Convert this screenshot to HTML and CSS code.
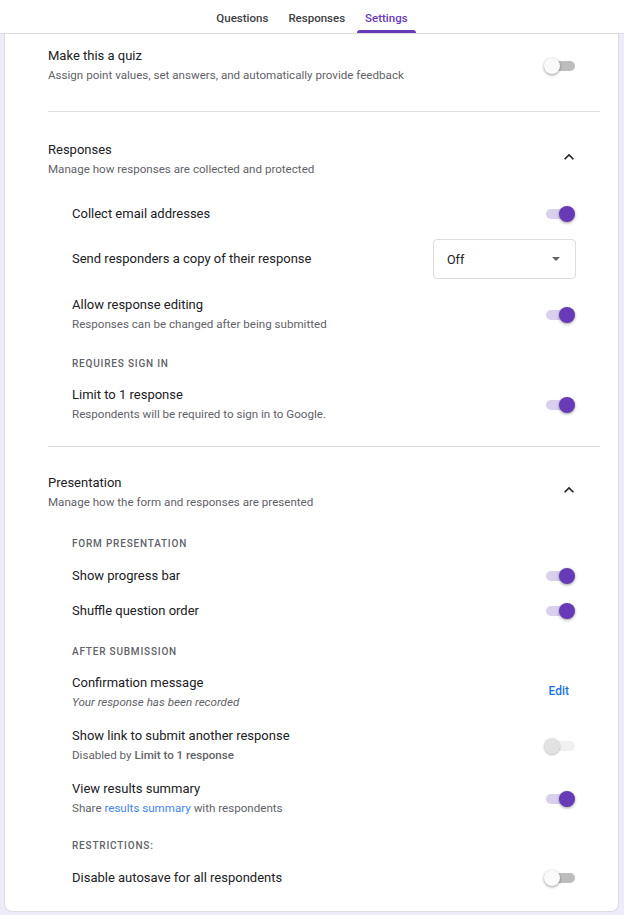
FILE: index.html
```html
<!DOCTYPE html>
<html lang="en">
<head>
<meta charset="utf-8">
<title>Settings</title>
<link rel="stylesheet" href="styles.css">
</head>
<body>
<header class="tabbar">
  <nav class="tabs">
    <a class="tab">Questions</a>
    <a class="tab">Responses</a>
    <a class="tab active">Settings</a>
  </nav>
</header>
<main class="card">
  <section class="section first">
    <div class="head">
      <div class="text">
        <div class="title">Make this a quiz</div>
        <div class="sub">Assign point values, set answers, and automatically provide feedback</div>
      </div>
      <span class="toggle off"><span class="track"></span><span class="thumb"></span></span>
    </div>
  </section>

  <section class="section responses">
    <div class="head chevron-head">
      <div class="text">
        <div class="title">Responses</div>
        <div class="sub">Manage how responses are collected and protected</div>
      </div>
      <svg class="chevron" viewBox="0 0 24 24" width="20" height="20"><path d="M12 8l-6 6 1.41 1.41L12 10.83l4.59 4.58L18 14z"/></svg>
    </div>
    <div class="list">
      <div class="row single">
        <div class="text"><div class="title">Collect email addresses</div></div>
        <span class="toggle on"><span class="track"></span><span class="thumb"></span></span>
      </div>
      <div class="row select-row">
        <div class="text"><div class="title">Send responders a copy of their response</div></div>
        <div class="select"><span>Off</span><span class="caret"></span></div>
      </div>
      <div class="row">
        <div class="text">
          <div class="title">Allow response editing</div>
          <div class="sub">Responses can be changed after being submitted</div>
        </div>
        <span class="toggle on"><span class="track"></span><span class="thumb"></span></span>
      </div>
      <div class="label">Requires sign in</div>
      <div class="row">
        <div class="text">
          <div class="title">Limit to 1 response</div>
          <div class="sub">Respondents will be required to sign in to Google.</div>
        </div>
        <span class="toggle on"><span class="track"></span><span class="thumb"></span></span>
      </div>
    </div>
  </section>

  <section class="section last">
    <div class="head chevron-head">
      <div class="text">
        <div class="title">Presentation</div>
        <div class="sub">Manage how the form and responses are presented</div>
      </div>
      <svg class="chevron" viewBox="0 0 24 24" width="20" height="20"><path d="M12 8l-6 6 1.41 1.41L12 10.83l4.59 4.58L18 14z"/></svg>
    </div>
    <div class="list">
      <div class="label">Form presentation</div>
      <div class="row single">
        <div class="text"><div class="title">Show progress bar</div></div>
        <span class="toggle on"><span class="track"></span><span class="thumb"></span></span>
      </div>
      <div class="row single">
        <div class="text"><div class="title">Shuffle question order</div></div>
        <span class="toggle on"><span class="track"></span><span class="thumb"></span></span>
      </div>
      <div class="label">After submission</div>
      <div class="row">
        <div class="text">
          <div class="title">Confirmation message</div>
          <div class="sub italic">Your response has been recorded</div>
        </div>
        <a class="edit">Edit</a>
      </div>
      <div class="row">
        <div class="text">
          <div class="title">Show link to submit another response</div>
          <div class="sub">Disabled by <b>Limit to 1 response</b></div>
        </div>
        <span class="toggle disabled"><span class="track"></span><span class="thumb"></span></span>
      </div>
      <div class="row">
        <div class="text">
          <div class="title">View results summary</div>
          <div class="sub">Share <a class="link">results summary</a> with respondents</div>
        </div>
        <span class="toggle on"><span class="track"></span><span class="thumb"></span></span>
      </div>
      <div class="label tight">Restrictions:</div>
      <div class="row single">
        <div class="text"><div class="title">Disable autosave for all respondents</div></div>
        <span class="toggle off"><span class="track"></span><span class="thumb"></span></span>
      </div>
    </div>
  </section>
</main>
</body>
</html>
```

FILE: styles.css
```css
* { box-sizing: border-box; }

html, body {
  margin: 0;
  padding: 0;
}

body {
  background: #f0ebf8;
  font-family: Roboto, "Noto Sans", Arial, sans-serif;
  color: #202124;
  width: 624px;
  height: 915px;
  overflow: hidden;
}

.tabbar {
  background: #fff;
  height: 34px;
  border-bottom: 1px solid #dadce0;
  display: flex;
  justify-content: center;
}

.tabs {
  display: flex;
  gap: 4px;
  height: 33px;
}

.tab {
  position: relative;
  display: flex;
  align-items: center;
  padding: 3px 8px 0;
  font-size: 11.5px;
  font-weight: 500;
  color: #3c4043;
}

.tab.active {
  color: #673ab7;
}

.tab.active::after {
  content: "";
  position: absolute;
  left: 0;
  right: 0;
  bottom: 0;
  height: 3px;
  background: #673ab7;
  border-radius: 3px 3px 0 0;
}

.card {
  background: #fff;
  margin: 0 5px 0 4px;
  border: 1px solid #dadce0;
  border-top: none;
  border-radius: 0 0 8px 8px;
}

.section {
  margin: 0 18px 0 43px;
  padding-top: 27px;
  border-bottom: 1px solid #dadce0;
}

.section.first {
  padding: 12px 0 26px;
}

.section.responses {
  padding-top: 28px;
}

.section.last {
  border-bottom: none;
  padding-top: 26px;
}

.head {
  display: flex;
  align-items: center;
  justify-content: space-between;
  padding-right: 24px;
}

.chevron-head {
  padding-right: 21px;
}

.chevron {
  fill: #202124;
  margin-top: -6px;
}

.title {
  font-size: 13px;
  line-height: 20px;
  color: #202124;
}

.sub {
  font-size: 11.6px;
  line-height: 19px;
  color: #5f6368;
}

.sub b {
  font-weight: 500;
}

.sub.italic {
  font-style: italic;
}

.link {
  color: #4285f4;
}

.list {
  display: flex;
  flex-direction: column;
  padding: 18px 24px 15px 24px;
}

.row {
  display: flex;
  align-items: center;
  justify-content: space-between;
  padding: 7px 0;
}

.row.single {
  padding: 7px 0 8px;
}

.row.select-row {
  padding: 7px 0 9px;
}

.label {
  font-size: 10px;
  line-height: 16px;
  font-weight: 500;
  letter-spacing: 0.8px;
  text-transform: uppercase;
  color: #5f6368;
  margin: 15px 0 6px;
}

.label:first-child {
  margin: 6px 0 7px;
}

.label.tight {
  margin: 13px 0 7px;
}

.select {
  width: 143px;
  height: 40px;
  border: 1px solid #dadce0;
  border-radius: 4px;
  display: flex;
  align-items: center;
  justify-content: space-between;
  padding: 0 15px 0 13px;
  font-size: 12.5px;
  color: #202124;
}

.caret {
  width: 0;
  height: 0;
  border-left: 4.5px solid transparent;
  border-right: 4.5px solid transparent;
  border-top: 4.5px solid #5f6368;
}

.edit {
  font-size: 12px;
  font-weight: 500;
  color: #1a73e8;
  margin-right: 7px;
  margin-top: -4px;
}

.toggle {
  position: relative;
  width: 32px;
  height: 18px;
  flex: none;
}

.toggle .track {
  position: absolute;
  left: 2px;
  right: 1px;
  top: 4px;
  height: 10px;
  border-radius: 5px;
  background: #bdbdbd;
}

.toggle .thumb {
  position: absolute;
  top: 1px;
  left: 0;
  width: 16px;
  height: 16px;
  border-radius: 50%;
  background: #fafafa;
  box-shadow: 0 1px 3px rgba(0, 0, 0, 0.4);
}

.toggle.on .track {
  background: #d9d0ed;
}

.toggle.on .thumb {
  left: 15px;
  background: #673ab7;
}

.toggle.disabled .track {
  background: #f1f1f1;
}

.toggle.disabled .thumb {
  background: #e2e2e2;
  box-shadow: 0 1px 2px rgba(0, 0, 0, 0.25);
}
```
